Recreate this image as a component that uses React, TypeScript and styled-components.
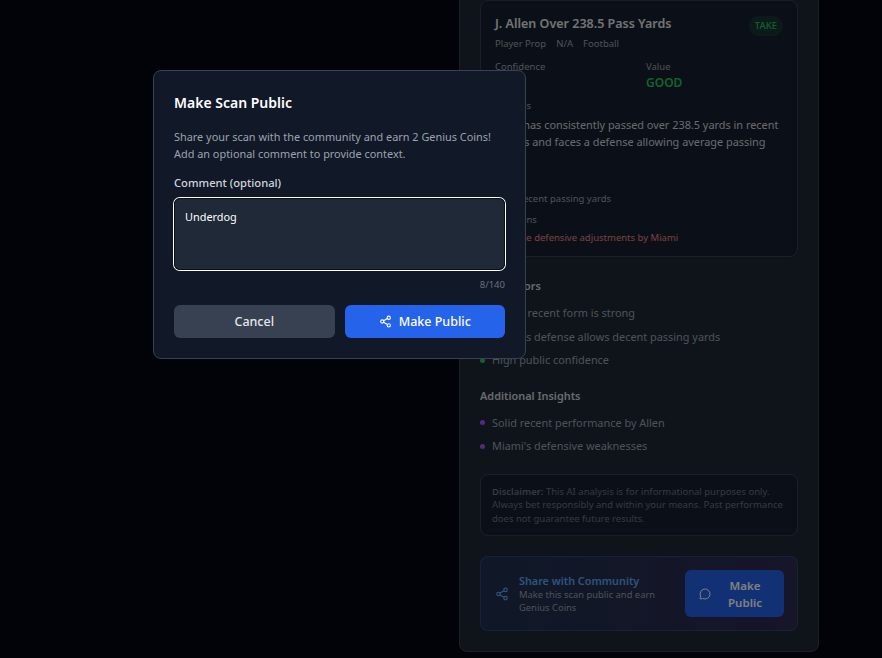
import { FC } from 'react'
import styled, { createGlobalStyle } from 'styled-components'
import { MessageCircle, Share2 } from 'lucide-react'

const GlobalStyle = createGlobalStyle`
  html, body {
    margin: 0;
    padding: 0;
    height: 100%;
    background: #030712;
    overflow: hidden;
  }
  * {
    box-sizing: border-box;
  }
  body {
    font-family: "Noto Sans", "Open Sans", sans-serif;
  }
`

const keyFactors = [
  "Allen's recent form is strong",
  "Miami's defense allows decent passing yards",
  'High public confidence',
]

const insights = ['Solid recent performance by Allen', "Miami's defensive weaknesses"]

const App: FC = () => {
  return (
    <>
      <GlobalStyle />
      <Stage>
        <Panel>
          <PickCard>
            <PickHeader>
              <PickTitle>J. Allen Over 238.5 Pass Yards</PickTitle>
              <TakeBadge>TAKE</TakeBadge>
            </PickHeader>
            <MetaRow>
              <span>Player Prop</span>
              <span>N/A</span>
              <span>Football</span>
            </MetaRow>
            <StatGrid>
              <div>
                <SmallLabel>Confidence</SmallLabel>
                <StatValue>75%</StatValue>
              </div>
              <div>
                <SmallLabel>Value</SmallLabel>
                <StatValue $good>GOOD</StatValue>
              </div>
            </StatGrid>
            <SmallLabel>Analysis</SmallLabel>
            <AnalysisText>
              Allen has consistently passed over 238.5 yards in recent games and faces a defense
              allowing average passing yards.
            </AnalysisText>
            <SmallLabel>Stats</SmallLabel>
            <StatLine>Solid recent passing yards</StatLine>
            <SmallLabel>Concerns</SmallLabel>
            <RiskLine>Possible defensive adjustments by Miami</RiskLine>
          </PickCard>

          <SectionTitle>Key Factors</SectionTitle>
          <BulletList>
            {keyFactors.map((item) => (
              <BulletItem key={item} $dot="#22c55e">
                {item}
              </BulletItem>
            ))}
          </BulletList>

          <SectionTitle>Additional Insights</SectionTitle>
          <BulletList>
            {insights.map((item) => (
              <BulletItem key={item} $dot="#a855f7">
                {item}
              </BulletItem>
            ))}
          </BulletList>

          <DisclaimerBox>
            <strong>Disclaimer:</strong> This AI analysis is for informational purposes only. Always
            bet responsibly and within your means. Past performance does not guarantee future
            results.
          </DisclaimerBox>

          <ShareBox>
            <ShareInfo>
              <Share2 size={14} color="#60a5fa" />
              <div>
                <ShareTitle>Share with Community</ShareTitle>
                <ShareText>Make this scan public and earn Genius Coins</ShareText>
              </div>
            </ShareInfo>
            <ShareButton>
              <MessageCircle size={12} />
              <span>Make Public</span>
            </ShareButton>
          </ShareBox>
        </Panel>
      </Stage>

      <Backdrop />

      <Modal>
        <ModalTitle>Make Scan Public</ModalTitle>
        <ModalText>
          Share your scan with the community and earn 2 Genius Coins!
          <br />
          Add an optional comment to provide context.
        </ModalText>
        <CommentLabel>Comment (optional)</CommentLabel>
        <CommentInput defaultValue="Underdog" />
        <CharCount>8/140</CharCount>
        <ButtonRow>
          <CancelButton>Cancel</CancelButton>
          <PublicButton>
            <Share2 size={13} />
            Make Public
          </PublicButton>
        </ButtonRow>
      </Modal>
    </>
  )
}

export default App

const Stage = styled.div`
  height: 100vh;
  display: flex;
  flex-direction: column;
  justify-content: flex-end;
  align-items: flex-start;
  padding: 0 0 6px 459px;
  overflow: hidden;
`
const Panel = styled.div`
  flex-shrink: 0;
  width: 360px;
  padding: 20px 20px 20px;
  background: #1f2937;
  border: 1px solid #374151;
  border-radius: 8px;
`
const PickCard = styled.div`
  padding: 14px 14px 11px;
  background: #172030;
  border: 1px solid #374151;
  border-radius: 8px;
  margin-bottom: 21px;
`
const PickHeader = styled.div`
  display: flex;
  justify-content: space-between;
  align-items: flex-start;
`
const PickTitle = styled.div`
  font-size: 12.5px;
  line-height: 18px;
  font-weight: 600;
  color: #e5e7eb;
`
const TakeBadge = styled.div`
  margin-top: 1px;
  padding: 0 6px;
  height: 20px;
  line-height: 20px;
  border-radius: 10px;
  font-size: 9.5px;
  font-weight: 500;
  color: #22c55e;
  background: rgba(34, 197, 94, 0.12);
`
const MetaRow = styled.div`
  display: flex;
  gap: 10px;
  font-size: 9.5px;
  line-height: 16px;
  color: #9ca3af;
`
const StatGrid = styled.div`
  display: grid;
  grid-template-columns: 1fr 1fr;
  column-gap: 14px;
  margin-top: 8px;
  margin-bottom: 8px;
`
const SmallLabel = styled.div`
  font-size: 9.5px;
  line-height: 14px;
  color: #9ca3af;
`
const StatValue = styled.div<{ $good?: boolean }>`
  font-size: 12px;
  line-height: 17px;
  font-weight: 600;
  color: ${({ $good }) => ($good ? '#22c55e' : '#ffffff')};
`
const AnalysisText = styled.div`
  margin: 3px 0 8px;
  font-size: 10.9px;
  line-height: 17px;
  color: #d1d5db;
`
const StatLine = styled.div`
  margin: 3px 0 7px;
  font-size: 9.5px;
  line-height: 14px;
  color: #9ca3af;
`
const RiskLine = styled.div`
  margin-top: 4px;
  font-size: 9.5px;
  line-height: 14px;
  color: #f08080;
`
const SectionTitle = styled.div`
  font-size: 10.9px;
  line-height: 16px;
  font-weight: 600;
  color: #d1d5db;
  margin-bottom: 11px;
`
const BulletList = styled.ul`
  list-style: none;
  margin: 0 0 19px;
  padding: 0;
  display: flex;
  flex-direction: column;
  gap: 7px;
`
const BulletItem = styled.li<{ $dot: string }>`
  display: flex;
  align-items: center;
  gap: 7px;
  font-size: 10.9px;
  line-height: 16.4px;
  color: #9ca3af;
  &::before {
    content: '';
    width: 5px;
    height: 5px;
    border-radius: 50%;
    background: ${({ $dot }) => $dot};
  }
`
const DisclaimerBox = styled.div`
  padding: 10px 11px;
  border: 1px solid #374151;
  border-radius: 8px;
  background: #172030;
  font-size: 9.5px;
  line-height: 13.5px;
  color: #6b7280;
  margin-top: 18px;
  margin-bottom: 20px;
  strong {
    font-weight: 600;
  }
`
const ShareBox = styled.div`
  display: flex;
  align-items: center;
  justify-content: space-between;
  height: 75px;
  padding: 0 13px 0 14px;
  border: 1px solid rgba(59, 130, 246, 0.25);
  border-radius: 8px;
  background: linear-gradient(90deg, rgba(37, 99, 235, 0.14), rgba(147, 51, 234, 0.14));
`
const ShareInfo = styled.div`
  display: flex;
  align-items: center;
  gap: 10px;
  width: 180px;
  svg {
    flex-shrink: 0;
  }
`
const ShareTitle = styled.div`
  font-size: 10.8px;
  line-height: 14px;
  font-weight: 600;
  color: #60a5fa;
`
const ShareText = styled.div`
  font-size: 9.4px;
  line-height: 13px;
  color: #9ca3af;
`
const ShareButton = styled.button`
  display: flex;
  align-items: center;
  gap: 9px;
  width: 99px;
  height: 47px;
  padding: 0 14px;
  border: none;
  border-radius: 6px;
  background: #2563eb;
  color: #ffffff;
  font-family: inherit;
  font-size: 11.5px;
  line-height: 17px;
  font-weight: 600;
  text-align: center;
  svg {
    flex-shrink: 0;
  }
`
const Backdrop = styled.div`
  position: fixed;
  inset: 0;
  background: rgba(0, 0, 0, 0.5);
`
const Modal = styled.div`
  position: fixed;
  left: 153px;
  top: 70px;
  width: 373px;
  height: 289px;
  padding: 20px;
  background: #111827;
  border: 1px solid #374151;
  border-radius: 8px;
`
const ModalTitle = styled.div`
  font-size: 14px;
  line-height: 24px;
  font-weight: 600;
  color: #ffffff;
  margin-bottom: 13px;
`
const ModalText = styled.div`
  font-size: 10.9px;
  line-height: 17px;
  color: #9ca3af;
  margin-bottom: 13px;
`
const CommentLabel = styled.div`
  font-size: 11.2px;
  line-height: 16px;
  font-weight: 500;
  color: #d1d5db;
  margin-bottom: 7px;
`
const CommentInput = styled.textarea`
  display: block;
  width: 100%;
  height: 72px;
  padding: 11px;
  resize: none;
  outline: none;
  background: #1f2937;
  border: none;
  border-radius: 6px;
  box-shadow: 0 0 0 1px #0b0f17 inset, 0 0 0 1px #ffffff;
  color: #ffffff;
  font-family: inherit;
  font-size: 10.9px;
  line-height: 16px;
`
const CharCount = styled.div`
  margin-top: 8px;
  text-align: right;
  font-size: 9.5px;
  line-height: 14px;
  color: #6b7280;
`
const ButtonRow = styled.div`
  display: grid;
  grid-template-columns: 1fr 1fr;
  gap: 10px;
  margin-top: 13px;
`
const CancelButton = styled.button`
  height: 33px;
  border: none;
  border-radius: 6px;
  background: #374151;
  color: #e5e7eb;
  font-family: inherit;
  font-size: 12.5px;
  font-weight: 500;
`
const PublicButton = styled(CancelButton)`
  display: flex;
  align-items: center;
  justify-content: center;
  gap: 7px;
  background: #2563eb;
  color: #ffffff;
`
